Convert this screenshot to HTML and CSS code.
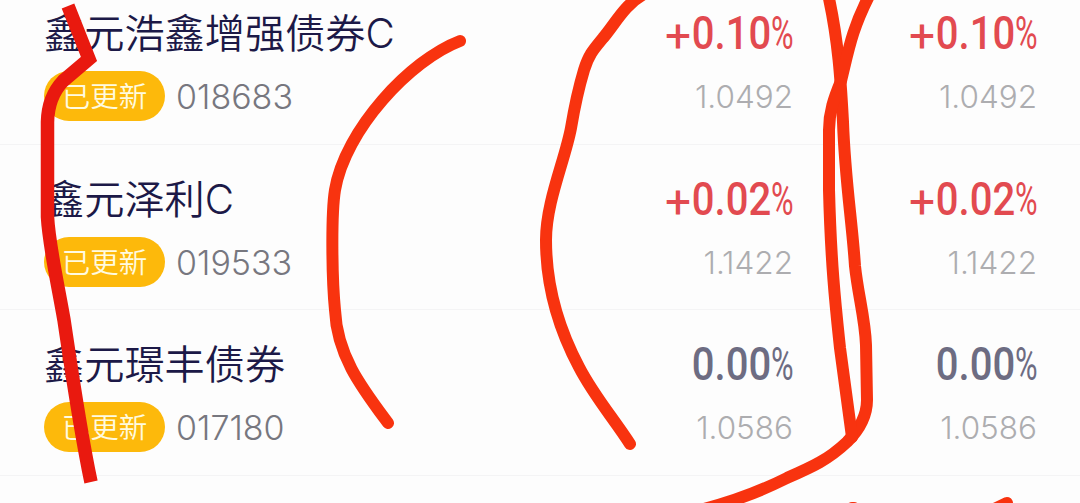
FILE: index.html
```html
<!DOCTYPE html>
<html lang="zh-CN">
<head>
    <meta charset="UTF-8">
    <meta name="viewport" content="width=device-width, initial-scale=1.0">
    <title>基金列表</title>
    <link rel="stylesheet" href="styles.css">
</head>
<body>
    <div class="fund-list">
        <div class="fund">
            <div class="info">
                <div class="name">鑫元浩鑫增强债券C</div>
                <div class="meta"><span class="badge">已更新</span><span class="code">018683</span></div>
            </div>
            <div class="quote">
                <div class="rate up"><span class="sign">+</span><span class="num">0.10</span><span class="pct">%</span></div>
                <div class="value">1.0492</div>
            </div>
            <div class="quote">
                <div class="rate up"><span class="sign">+</span><span class="num">0.10</span><span class="pct">%</span></div>
                <div class="value">1.0492</div>
            </div>
        </div>

        <div class="fund">
            <div class="info">
                <div class="name">鑫元泽利C</div>
                <div class="meta"><span class="badge">已更新</span><span class="code">019533</span></div>
            </div>
            <div class="quote">
                <div class="rate up"><span class="sign">+</span><span class="num">0.02</span><span class="pct">%</span></div>
                <div class="value">1.1422</div>
            </div>
            <div class="quote">
                <div class="rate up"><span class="sign">+</span><span class="num">0.02</span><span class="pct">%</span></div>
                <div class="value">1.1422</div>
            </div>
        </div>

        <div class="fund">
            <div class="info">
                <div class="name">鑫元璟丰债券</div>
                <div class="meta"><span class="badge">已更新</span><span class="code">017180</span></div>
            </div>
            <div class="quote">
                <div class="rate"><span class="num">0.00</span><span class="pct">%</span></div>
                <div class="value">1.0586</div>
            </div>
            <div class="quote">
                <div class="rate"><span class="num">0.00</span><span class="pct">%</span></div>
                <div class="value">1.0586</div>
            </div>
        </div>
    </div>

    <!-- pen marks over the list -->
    <svg class="marks" width="1080" height="503" viewBox="0 0 1080 503">
        <path class="pen dark" d="M68 6 L89 59 L63 81 Q48 97 47.500 122 L47.500 217 C49 245 57 280 64 320 C70 360 80 430 91 482"/>
        <path class="pen" d="M460 41 C410 60 345 130 335 190 C331 215 332 280 335 310 C337 356 362 388 388 423"/>
        <path class="pen" d="M644 -6 C625 4 615 24 603 38 C594 49 589 54 584 70 C578 90 574 110 571 128 C565 160 546 202 546 240 C546 290 562 335 579 367 C594 396 614 419 630 444"/>
        <path class="pen" d="M828 -6 C839 43 841 86 843 122 C845 180 852 220 855 266 C858 295 865 318 866 345 L867 400 C867 417 858 431 847 442 C828 460 812 467 787 478 C761 491 735 501 704 509"/>
        <path class="pen" d="M870 -6 C852 29 849 48 841 81 C834 98 829 112 829 130 L829 190 C831 267 836 310 840 348 L852 437"/>
        <path class="pen" d="M988 512 L1007 503"/>
        <path class="pen" d="M852 508 L854 508"/>
    </svg>
</body>
</html>
```

FILE: styles.css
```css
body {
    margin: 0;
    height: 503px;
    overflow: hidden;
    position: relative;
    background-color: #fdfdfd;
    font-family: Inter, "Noto Sans CJK SC", sans-serif;
}
.fund-list {
    display: flow-root;
    margin-top: -21px;
}
.fund {
    display: grid;
    grid-template-columns: 1fr 244px 244px;
    box-sizing: border-box;
    height: 165.5px;
    padding: 24px 43px 0 44px;
    border-bottom: 1px solid #f4f4f5;
}
.name {
    height: 60px;
    line-height: 61px;
    font-size: 40.2px;
    font-weight: 350;
    color: #1c1947;
    white-space: nowrap;
}
.meta {
    display: flex;
    align-items: flex-start;
    gap: 11px;
    margin-top: 8px;
}
.badge {
    width: 121px;
    height: 50px;
    line-height: 52px;
    border-radius: 25px;
    background-color: #fdb90b;
    color: #fffbe0;
    font-size: 28.5px;
    font-weight: 350;
    text-align: center;
}
.code {
    line-height: 51px;
    font-size: 34px;
    font-weight: 300;
    color: #77777f;
}
.quote {
    text-align: right;
}
.rate {
    display: flex;
    justify-content: flex-end;
    height: 60px;
    line-height: 60px;
    margin-right: -1px;
    font-family: Roboto, sans-serif;
    font-size: 46px;
    color: #6d6c82;
}
.rate.up {
    color: #e24a50;
}
.num {
    font-weight: 500;
    transform: scaleX(0.87);
    transform-origin: right;
}
.sign {
    margin-right: -11px;
    padding-top: 3px;
}
.pct {
    margin-left: -11px;
    transform: scaleX(0.67);
    transform-origin: right;
}
.value {
    margin-top: 9px;
    line-height: 50px;
    font-size: 31.5px;
    font-weight: 300;
    color: #adadb0;
}
.marks {
    position: absolute;
    top: 0;
    left: 0;
}
.pen {
    fill: none;
    stroke: #f8330f;
    stroke-width: 12;
    stroke-linecap: round;
    stroke-linejoin: round;
}
.pen.dark {
    stroke: #e9190f;
    stroke-width: 13.5;
    stroke-linecap: butt;
    stroke-linejoin: miter;
}
```
